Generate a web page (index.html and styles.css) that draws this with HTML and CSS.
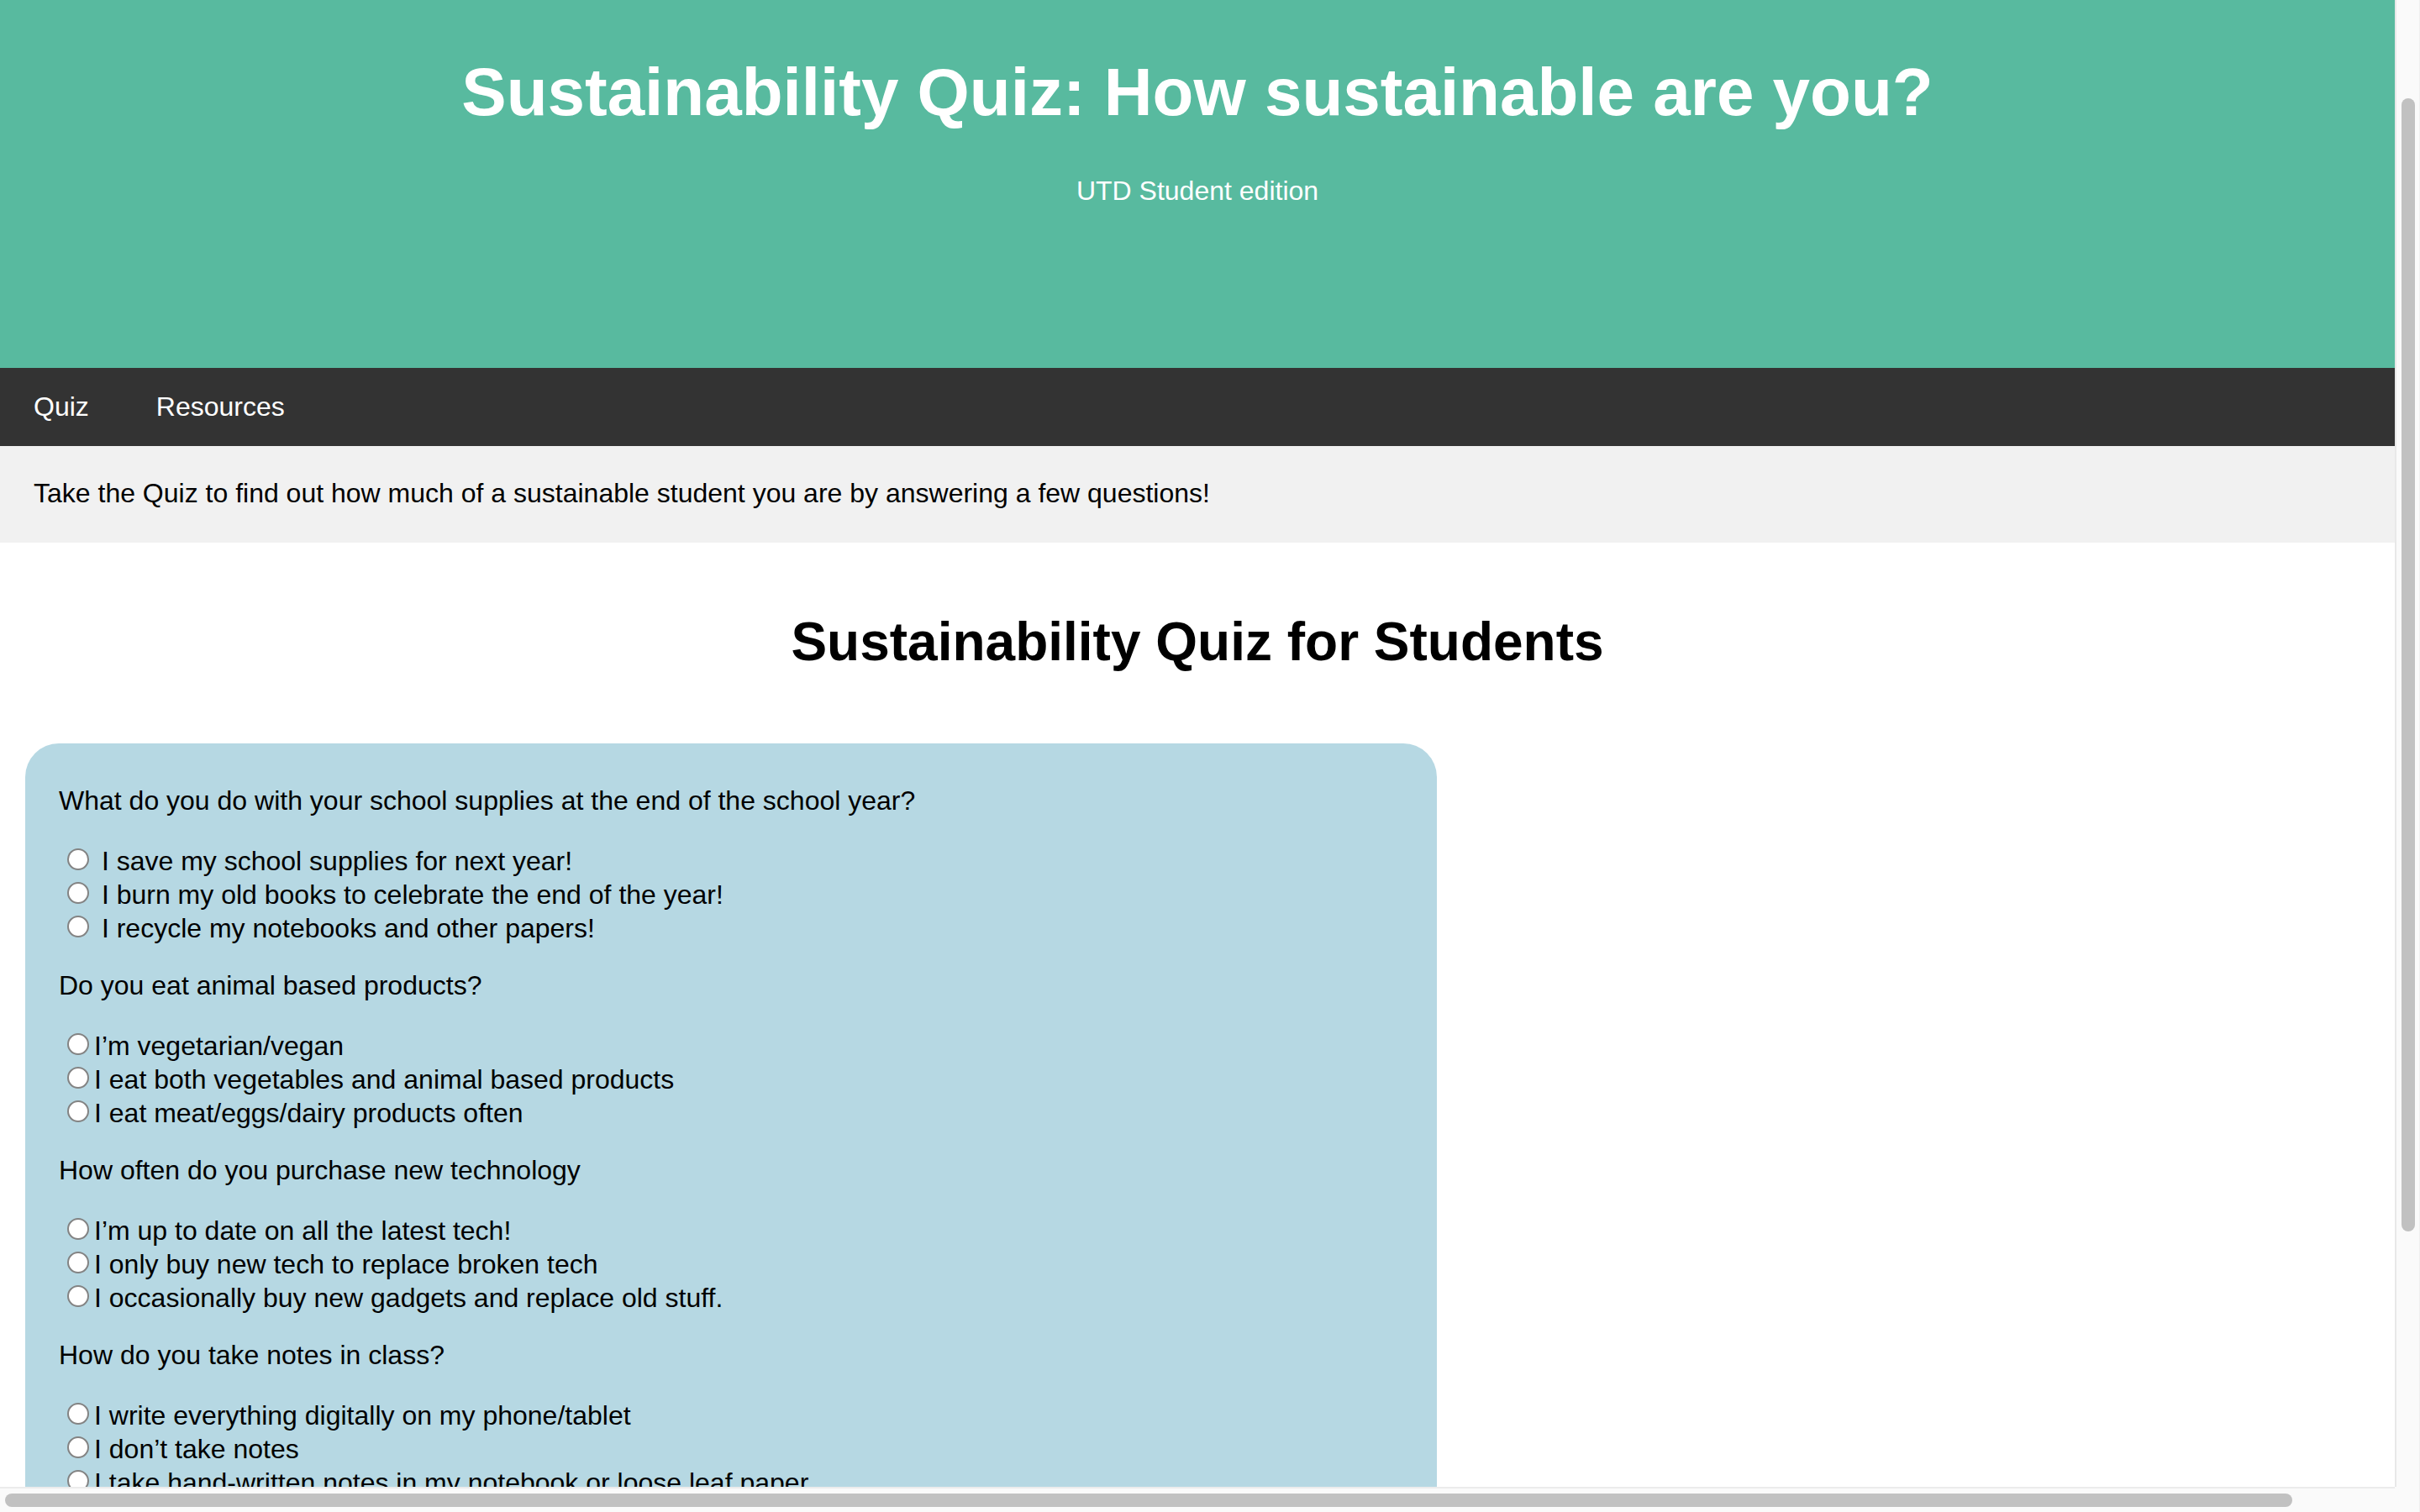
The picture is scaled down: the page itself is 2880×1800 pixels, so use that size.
FILE: index.html
```html
<!DOCTYPE html>
<html lang="en">
<head>
<meta charset="utf-8">
<title>Sustainability Quiz</title>
<link rel="stylesheet" href="styles.css">
</head>
<body>
<div class="window">
  <div class="viewport">
    <header class="hero">
      <h1 class="hero-title">Sustainability Quiz: How sustainable are you?</h1>
      <p class="hero-sub">UTD Student edition</p>
    </header>
    <nav class="topnav">
      <a class="topnav-link" href="#quiz">Quiz</a>
      <a class="topnav-link" href="#resources">Resources</a>
    </nav>
    <div class="intro">
      <p class="intro-text">Take the Quiz to find out how much of a sustainable student you are by answering a few questions!</p>
    </div>
    <main class="content">
      <h2 class="quiz-title">Sustainability Quiz for Students</h2>
      <form class="quiz" id="quiz">
        <p class="question">What do you do with your school supplies at the end of the school year?</p>
        <div class="options">
          <label class="option"><input class="radio" type="radio" name="q1"> I save my school supplies for next year!</label><br>
          <label class="option"><input class="radio" type="radio" name="q1"> I burn my old books to celebrate the end of the year!</label><br>
          <label class="option"><input class="radio" type="radio" name="q1"> I recycle my notebooks and other papers!</label>
        </div>
        <p class="question">Do you eat animal based products?</p>
        <div class="options">
          <label class="option"><input class="radio" type="radio" name="q2">I’m vegetarian/vegan</label><br>
          <label class="option"><input class="radio" type="radio" name="q2">I eat both vegetables and animal based products</label><br>
          <label class="option"><input class="radio" type="radio" name="q2">I eat meat/eggs/dairy products often</label>
        </div>
        <p class="question">How often do you purchase new technology</p>
        <div class="options">
          <label class="option"><input class="radio" type="radio" name="q3">I’m up to date on all the latest tech!</label><br>
          <label class="option"><input class="radio" type="radio" name="q3">I only buy new tech to replace broken tech</label><br>
          <label class="option"><input class="radio" type="radio" name="q3">I occasionally buy new gadgets and replace old stuff.</label>
        </div>
        <p class="question">How do you take notes in class?</p>
        <div class="options">
          <label class="option"><input class="radio" type="radio" name="q4">I write everything digitally on my phone/tablet</label><br>
          <label class="option"><input class="radio" type="radio" name="q4">I don’t take notes</label><br>
          <label class="option"><input class="radio" type="radio" name="q4">I take hand-written notes in my notebook or loose leaf paper</label>
        </div>
      </form>
    </main>
  </div>
  <div class="vbar"><div class="vthumb"></div></div>
  <div class="hbar"><div class="hthumb"></div></div>
  <div class="corner"></div>
</div>
</body>
</html>
```

FILE: styles.css
```css
html, body {
  margin: 0;
  padding: 0;
  background: #ffffff;
}

body {
  font-family: "Liberation Sans", Arial, Helvetica, sans-serif;
  font-size: 32px;
  color: #000000;
  overflow: hidden;
}

.window {
  display: grid;
  grid-template-columns: 2850px 30px;
  grid-template-rows: 1770px 30px;
  width: 2880px;
  height: 1800px;
}

.viewport {
  overflow: hidden;
  background: #ffffff;
}

/* Header */
.hero {
  box-sizing: border-box;
  height: 438px;
  background: #58ba9f;
  color: #ffffff;
  text-align: center;
  overflow: hidden;
  padding-top: 1px;
}

.hero-title {
  margin: 63px 0 53px;
  font-size: 80px;
  font-weight: bold;
  line-height: normal;
}

.hero-sub {
  margin: 0;
  font-size: 32px;
}

/* Nav */
.topnav {
  display: flex;
  background: #333333;
}

.topnav-link {
  display: block;
  padding: 28px 40px;
  color: #ffffff;
  text-decoration: none;
  font-size: 32px;
  line-height: normal;
}

/* Intro */
.intro {
  background: #f1f1f1;
  padding: 38px 40px 40px;
}

.intro-text {
  margin: 0;
}

/* Content */
.content {
  padding: 1px 0 0;
}

.quiz-title {
  margin: 80px 0 84px;
  text-align: center;
  font-size: 64px;
  font-weight: bold;
  line-height: normal;
}

.quiz {
  width: 1600px;
  margin-left: 30px;
  padding: 19px 40px 40px;
  background: #b6d8e3;
  border-radius: 40px;
}

.question {
  margin: 31px 0 32px;
}

.options {
  line-height: normal;
}

.option {
  white-space: nowrap;
}

.radio {
  appearance: none;
  -webkit-appearance: none;
  box-sizing: border-box;
  display: inline-block;
  width: 26px;
  height: 26px;
  margin: 6px 6px 0 10px;
  border: 2px solid #838383;
  border-radius: 50%;
  background: #ffffff;
  vertical-align: baseline;
}

/* Scrollbars */
.vbar {
  box-sizing: border-box;
  background: #fafafa;
  border-left: 2px solid #e8e8e8;
  border-right: 1px solid #efefef;
  padding-top: 117px;
}

.vthumb {
  width: 16px;
  height: 1349px;
  margin-left: 6px;
  border-radius: 8px;
  background: #c1c1c1;
}

.hbar {
  box-sizing: border-box;
  background: #fafafa;
  border-top: 2px solid #ececec;
  padding-top: 6px;
  padding-left: 6px;
}

.hthumb {
  width: 2722px;
  height: 16px;
  border-radius: 8px;
  background: #c1c1c1;
}

.corner {
  box-sizing: border-box;
  background: #fafafa;
  border-right: 1px solid #efefef;
}
```
